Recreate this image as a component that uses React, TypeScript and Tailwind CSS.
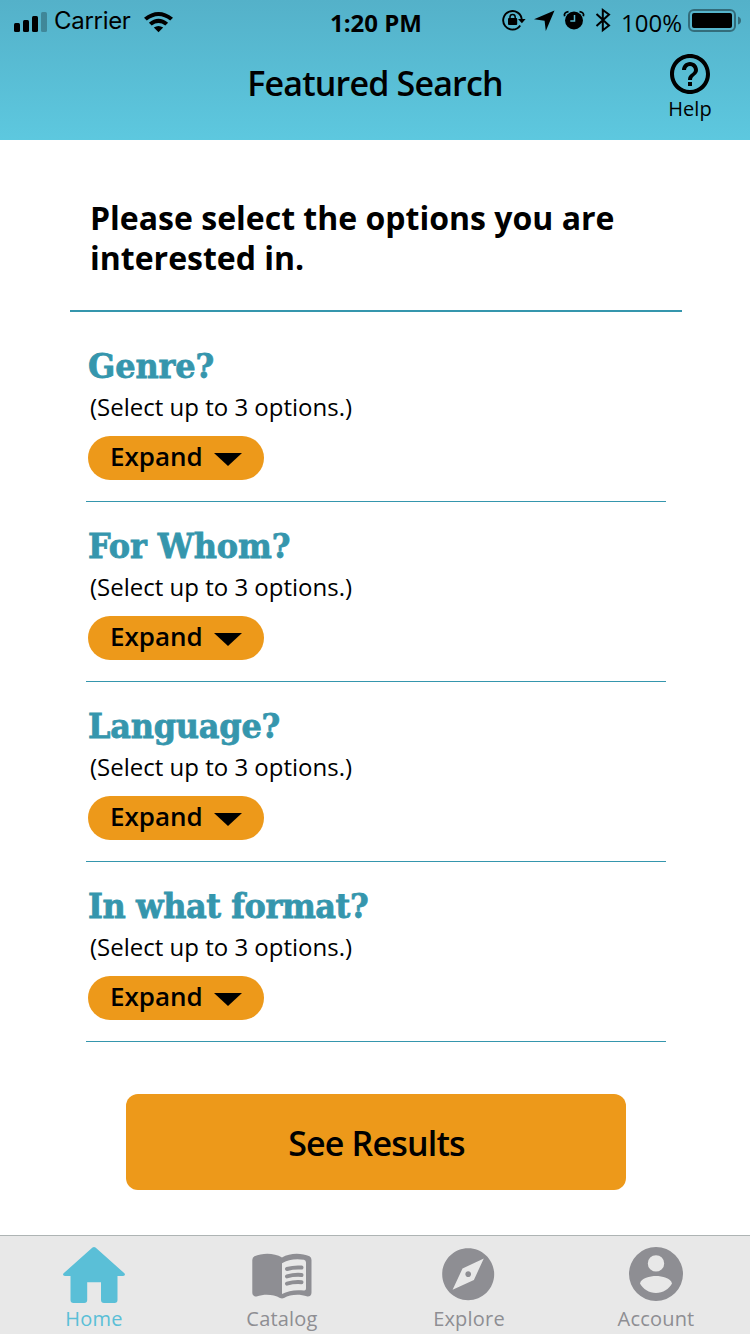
import { MdExplore, MdHelpOutline } from "react-icons/md";

const questions = [
  { title: "Genre?", spacing: "tracking-[-0.1px]" },
  { title: "For Whom?", spacing: "tracking-[-0.1px]" },
  { title: "Language?", spacing: "tracking-[-0.25px]" },
  { title: "In what format?", spacing: "tracking-[-0.45px]" },
];

function StatusBar() {
  return (
    <div className="grid h-10 grid-cols-[250px_250px_250px] leading-10">
      <div className="flex items-center">
        <svg className="ml-3 h-10 w-9" viewBox="12 0 36 40">
          <rect x="14" y="21" width="6" height="9" rx="1.5" />
          <rect x="23" y="18" width="6" height="12" rx="1.5" />
          <rect x="32" y="14" width="6" height="16" rx="1.5" />
          <rect x="41" y="10" width="6" height="20" rx="1.5" opacity=".25" />
        </svg>
        <span className="-mt-[2px] ml-[6px] w-[90px] font-['Inter',sans-serif] text-2xl leading-10 tracking-[-0.3px]">Carrier</span>
        <svg className="h-10 w-[30px]" viewBox="144 0 30 40">
          <path d="M144 15.800Q158.500 4.200 173 15.800L170.200 18.600Q158.500 9.600 146.800 18.600ZM148.900 20.700Q158.500 13 168.100 20.700L165.300 23.500Q158.500 18.700 151.700 23.500ZM153.800 25.600Q158.500 22.200 163.200 25.600L158.500 30.200Z" />
        </svg>
      </div>
      <div className="pt-[3px] pl-[2px] text-center text-2xl leading-10 font-bold">1:20 PM</div>
      <div className="flex">
        <svg className="h-10 w-[121px] shrink-0" viewBox="500 0 121 40">
          <path d="M520.200 25.500A9.300 9.300 0 1 1 521.800 20" fill="none" stroke="#000" strokeWidth="1.900" />
          <path d="M518 19H525.600L521.900 23.200Z" />
          <rect x="508" y="18" width="9.200" height="7" rx="1" />
          <path d="M510 19v-2a2.600 2.600 0 0 1 5.200 0v2" fill="none" stroke="#000" strokeWidth="1.500" />
          <path d="M554.500 10.500 545.800 31 544.600 20.800 534 19.300Z" />
          <circle cx="574" cy="20.500" r="9" />
          <path d="M564.700 16.300Q563.300 12.400 568.500 11.700M583.300 16.300Q584.700 12.400 579.500 11.700" fill="none" stroke="#000" strokeWidth="1.800" />
          <path d="M574.500 15v6h-4.200" fill="none" stroke="#59b9d0" strokeWidth="1.500" />
          <path d="M596.500 14 609 25.500 602.800 30.300V10L609 14.500 596.500 26" fill="none" stroke="#000" strokeWidth="2" />
        </svg>
        <span className="w-[67px] pt-[3px] text-2xl leading-10">100%</span>
        <svg className="h-10 w-[54px] shrink-0" viewBox="688 0 54 40">
          <rect x="689" y="10" width="46" height="21" rx="5" fill="none" stroke="#000" strokeOpacity=".4" strokeWidth="2" />
          <rect x="692" y="13" width="40" height="15" rx="2" />
          <path d="M738 16.500Q741 17.500 741 20.500T738 24.500Z" opacity=".4" />
        </svg>
      </div>
    </div>
  );
}

function Tab({ label, active, children }: { label: string; active?: boolean; children: React.ReactNode }) {
  return (
    <a className={`flex flex-col items-center ${active ? "text-[#5abfd7]" : "text-[#8e8e93]"}`}>
      <span className="flex h-[69px] w-full items-center justify-center">{children}</span>
      <span className="text-xl leading-[28px] tracking-[0.2px]">{label}</span>
    </a>
  );
}

export default function App() {
  return (
    <div className="flex h-[1334px] w-[750px] flex-col overflow-hidden bg-white font-['Open_Sans',sans-serif] text-black">
      <header className="h-[140px] bg-linear-to-b from-[#54b1c9] to-[#5dc8df]">
        <StatusBar />
        <div className="grid grid-cols-[120px_510px_120px]">
          <h1 className="col-start-2 pt-[21px] text-center text-[34px] leading-[44px] font-semibold tracking-[-0.82px]">Featured Search</h1>
          <button className="flex flex-col items-center pt-[10px]">
            <MdHelpOutline size={48} />
            <span className="-mt-[3px] text-xl leading-[28px]">Help</span>
          </button>
        </div>
      </header>

      <main className="flex h-[1095px] flex-col">
        <h2 className="mt-[58px] ml-[90px] text-[32px] leading-10 font-bold">
          Please select the options you are
          <br />
          interested in.
        </h2>
        <hr className="mt-[32px] ml-[70px] w-[612px] border-t-2 border-[#3596ad]" />
        <div className="ml-[86px] w-[580px] pt-[10px]">
          {questions.map((q) => (
            <section key={q.title} className="h-[180px] border-b border-[#3596ad] pt-[23px]">
              <h3 className={`ml-[2px] origin-left scale-x-[.94] font-['DejaVu_Serif',serif] text-[34px] leading-[42px] font-bold whitespace-nowrap text-[#3596ad] [-webkit-text-stroke:0.8px_#3596ad] ${q.spacing}`}>{q.title}</h3>
              <p className="pl-1 text-2xl leading-[40px]">(Select up to 3 options.)</p>
              <button className="mt-[9px] ml-[2px] flex h-11 w-[176px] items-center rounded-full bg-[#ed991a] pl-[22px]">
                <span className="-mt-[5px] w-[104px] text-left text-[26px] leading-[40px] font-semibold">Expand</span>
                <svg className="mt-[2px] h-[13px] w-7" viewBox="0 0 28 13">
                  <path d="M0 0H28L14 13Z" />
                </svg>
              </button>
            </section>
          ))}
        </div>
        <button className="mt-[52px] ml-[126px] h-24 w-[500px] rounded-xl bg-[#ed991a] pt-[2px] pl-[1px] text-[34px] font-semibold tracking-[-0.82px]">See Results</button>
      </main>

      <nav className="grid h-[99px] grid-cols-[188px_188px_186px_188px] border-t border-[#aeb4b4] bg-[#e8e8e8]">
        <Tab label="Home" active>
          <svg className="h-[69px] w-[70px]" viewBox="59 1236 70 69" fill="currentColor">
            <path d="M92.500 1247.500Q94 1246.400 95.500 1247.500L124.400 1273.300Q126 1276 123 1276H117.500V1300Q117.500 1303 114.500 1303H104Q101 1303 101 1300V1282.300H87.200V1300Q87.200 1303 84.200 1303H73.500Q70.500 1303 70.500 1300V1276H65Q62 1276 63.600 1273.300Z" />
          </svg>
        </Tab>
        <Tab label="Catalog">
          <svg className="h-[69px] w-[70px]" viewBox="247 1236 70 69" fill="currentColor">
            <path fillRule="evenodd" d="M252.300 1260Q252.300 1257.300 254.500 1256.200C262 1253 274 1252.500 282 1257.500C290 1252.500 302 1253 309.500 1256.200Q311.500 1257.300 311.500 1260V1292.500Q311.500 1296.500 307.500 1296.500C298 1293.500 290 1295 284 1298Q282 1298.800 280 1298C274 1295 266 1293.500 256.500 1296.500Q252.300 1296.500 252.300 1292.500ZM282 1263.300V1294C288 1290.500 296 1289.500 304 1290.500Q306 1290.700 306 1288.500V1262.500Q306 1260.300 304 1259.800C296 1258.500 288 1259.500 282 1263.300Z" />
            <path d="M287 1269Q294 1267 301.500 1267.600M287 1276.400Q294 1274.400 301.500 1275M287 1283.600Q294 1281.600 301.500 1282.200" fill="none" stroke="currentColor" strokeWidth="4" strokeLinecap="round" />
          </svg>
        </Tab>
        <Tab label="Explore">
          <MdExplore size={62.4} className="mt-[8px] mr-[2px]" />
        </Tab>
        <Tab label="Account">
          <svg className="h-[69px] w-[60px]" viewBox="626 1236 60 69" fill="currentColor">
            <path fillRule="evenodd" d="M656 1247a27 27 0 1 0 0 54a27 27 0 1 0 0-54ZM656 1255.200a8.200 8.200 0 1 1 0 16.400a8.200 8.200 0 1 1 0-16.400ZM640 1283.500C641 1278 650 1276 656 1276S671 1278 672 1283.500C669 1289 663 1293 656 1293S643 1289 640 1283.500Z" />
          </svg>
        </Tab>
      </nav>
    </div>
  );
}
